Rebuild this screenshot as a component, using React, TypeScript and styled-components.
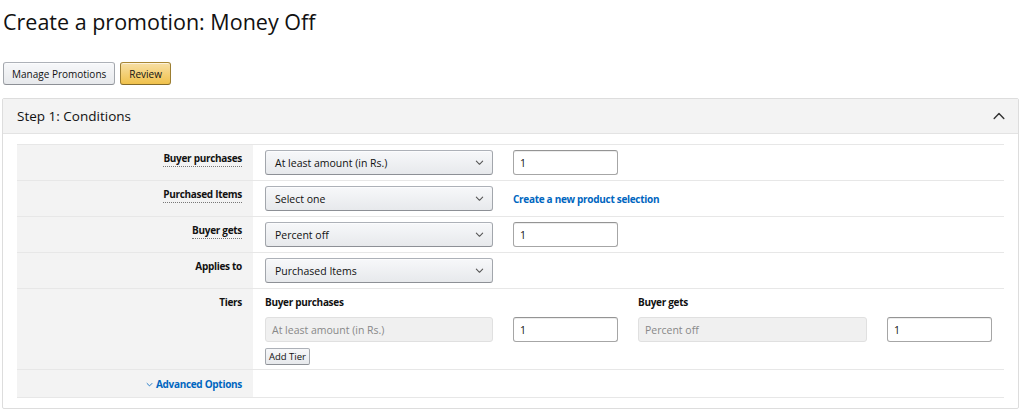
import React from 'react';
import styled, { createGlobalStyle } from 'styled-components';

const GlobalStyle = createGlobalStyle`
    body {
        margin: 0;
        background: #ffffff;
        font-family: 'Open Sans', 'Liberation Sans', Arial, sans-serif;
        color: #111111;
    }
`;

const Page = styled.div`
    padding: 0 5px 0 2px;
`;

const Title = styled.h1`
    margin: 0;
    padding: 8px 0 0 1px;
    height: 53px;
    box-sizing: border-box;
    font-size: 21.5px;
    font-weight: 400;
    line-height: 28px;
    color: #111;
`;

const Toolbar = styled.div`
    display: flex;
    gap: 5px;
    padding-left: 1px;
    margin-top: 9px;
`;

const Button = styled.button<{ $primary?: boolean }>`
    height: 23px;
    padding: 0 8px;
    font-family: inherit;
    font-size: 10px;
    color: #111;
    border-radius: 3px;
    border: 1px solid;
    cursor: pointer;
    border-color: ${(p) => (p.$primary ? '#a88734 #9c7e31 #846a29' : '#adb1b8 #a2a6ac #8d9096')};
    background: ${(p) =>
        p.$primary ? 'linear-gradient(to bottom, #f7dfa5, #f0c14b)' : 'linear-gradient(to bottom, #f7f8fa, #e7e9ec)'};
    box-shadow: 0 1px 0 rgba(255, 255, 255, 0.6) inset;
`;

const Panel = styled.section`
    margin-top: 13px;
    border: 1px solid #dddddd;
    border-radius: 2px;
`;

const PanelHeader = styled.div`
    height: 34px;
    display: flex;
    align-items: center;
    justify-content: space-between;
    padding: 0 13px 0 14px;
    background: #f3f3f3;
    border-bottom: 1px solid #e3e3e3;
    font-size: 13.5px;
    color: #111;
`;

const PanelBody = styled.div`
    padding: 10px 14px 10px 14px;
`;

const Table = styled.div`
    border-top: 1px solid #e7e7e7;
`;

const Row = styled.div`
    display: grid;
    grid-template-columns: 236px 1fr;
    border-bottom: 1px solid #e7e7e7;
`;

const Label = styled.div`
    background: #f3f3f3;
    text-align: right;
    padding: 6px 11px 0 0;
    font-size: 10px;
    line-height: 14px;
    font-weight: 700;
    letter-spacing: -0.3px;
    color: #111;
`;

const Hint = styled.span`
    border-bottom: 1px dotted #777;
    padding-bottom: 1px;
`;

const Cell = styled.div<{ $empty?: boolean }>`
    display: flex;
    align-items: center;
    gap: 20px;
    padding: 5px 0 5px 12px;
    min-height: ${(p) => (p.$empty ? 17 : 25)}px;
`;

const SelectBox = styled.div`
    width: 228px;
    height: 25px;
    box-sizing: border-box;
    display: flex;
    align-items: center;
    justify-content: space-between;
    padding: 0 8px 0 9px;
    font-size: 10.5px;
    color: #111;
    border: 1px solid;
    border-color: #adb1b8 #a2a6ac #8d9096;
    border-radius: 3px;
    background: linear-gradient(to bottom, #f7f8fa, #e7e9ec);
    box-shadow: 0 1px 0 rgba(255, 255, 255, 0.6) inset;
`;

const TextInput = styled.div<{ $width?: number; $disabled?: boolean }>`
    width: ${(p) => p.$width ?? 105}px;
    height: 25px;
    box-sizing: border-box;
    display: flex;
    align-items: center;
    padding: 0 6px;
    font-size: 10.5px;
    color: ${(p) => (p.$disabled ? '#888' : '#111')};
    background: ${(p) => (p.$disabled ? '#f0f0f0' : '#fff')};
    border: 1px solid;
    border-color: ${(p) => (p.$disabled ? '#e0e0e0' : '#949494 #a6a6a6 #a6a6a6')};
    border-radius: 3px;
    box-shadow: ${(p) => (p.$disabled ? 'none' : '0 1px 0 rgba(255,255,255,.5), 0 1px 0 rgba(0,0,0,.07) inset')};
`;

const Link = styled.a`
    color: #0066c0;
    font-size: 10px;
    font-weight: 700;
    letter-spacing: -0.3px;
    text-decoration: none;
`;

const TierCell = styled.div`
    padding: 5px 0 4px 12px;
`;

const TierGrid = styled.div`
    display: grid;
    grid-template-columns: 228px 105px 229px 105px;
    column-gap: 20px;
    align-items: center;
`;

const TierHead = styled.div`
    font-size: 10px;
    font-weight: 700;
    letter-spacing: -0.3px;
    height: 23px;
    line-height: 16px;
`;

const SmallButton = styled.button`
    margin-top: 6px;
    height: 17px;
    padding: 0 3px;
    font-family: inherit;
    font-size: 9.5px;
    color: #111;
    border: 1px solid;
    border-color: #adb1b8 #a2a6ac #8d9096;
    border-radius: 2px;
    background: linear-gradient(to bottom, #f7f8fa, #e7e9ec);
`;

const AdvLink = styled(Link)`
    display: inline-flex;
    align-items: center;
    gap: 3px;
    margin-top: 1px;
`;

const Chevron = ({ up, size = 10, color = '#555' }: { up?: boolean; size?: number; color?: string }) => (
    <svg width={size} height={size} viewBox="0 0 10 10" fill="none">
        <path
            d={up ? 'M1 7 L5 3 L9 7' : 'M1.5 3.5 L5 7 L8.5 3.5'}
            stroke={color}
            strokeWidth="1.2"
            strokeLinecap="round"
            strokeLinejoin="round"
        />
    </svg>
);

const Select = ({ value }: { value: string }) => (
    <SelectBox>
        {value}
        <Chevron size={9} />
    </SelectBox>
);

const App = () => {
    return (
        <>
            <GlobalStyle />
            <Page>
                <Title>Create a promotion: Money Off</Title>
                <Toolbar>
                    <Button>Manage Promotions</Button>
                    <Button $primary>Review</Button>
                </Toolbar>
                <Panel>
                    <PanelHeader>
                        Step 1: Conditions
                        <Chevron up size={12} color="#333" />
                    </PanelHeader>
                    <PanelBody>
                        <Table>
                            <Row>
                                <Label>
                                    <Hint>Buyer purchases</Hint>
                                </Label>
                                <Cell>
                                    <Select value="At least amount (in Rs.)" />
                                    <TextInput>1</TextInput>
                                </Cell>
                            </Row>
                            <Row>
                                <Label>
                                    <Hint>Purchased Items</Hint>
                                </Label>
                                <Cell>
                                    <Select value="Select one" />
                                    <Link href="#">Create a new product selection</Link>
                                </Cell>
                            </Row>
                            <Row>
                                <Label>
                                    <Hint>Buyer gets</Hint>
                                </Label>
                                <Cell>
                                    <Select value="Percent off" />
                                    <TextInput>1</TextInput>
                                </Cell>
                            </Row>
                            <Row>
                                <Label>Applies to</Label>
                                <Cell>
                                    <Select value="Purchased Items" />
                                </Cell>
                            </Row>
                            <Row>
                                <Label>Tiers</Label>
                                <TierCell>
                                    <TierGrid>
                                        <TierHead>Buyer purchases</TierHead>
                                        <div />
                                        <TierHead>Buyer gets</TierHead>
                                        <div />
                                        <TextInput $width={228} $disabled>
                                            At least amount (in Rs.)
                                        </TextInput>
                                        <TextInput>1</TextInput>
                                        <TextInput $width={229} $disabled>
                                            Percent off
                                        </TextInput>
                                        <TextInput>1</TextInput>
                                    </TierGrid>
                                    <SmallButton>Add Tier</SmallButton>
                                </TierCell>
                            </Row>
                            <Row>
                                <Label>
                                    <AdvLink href="#">
                                        <Chevron size={7} color="#0066c0" />
                                        Advanced Options
                                    </AdvLink>
                                </Label>
                                <Cell $empty />
                            </Row>
                        </Table>
                    </PanelBody>
                </Panel>
            </Page>
        </>
    );
};

export default App;
